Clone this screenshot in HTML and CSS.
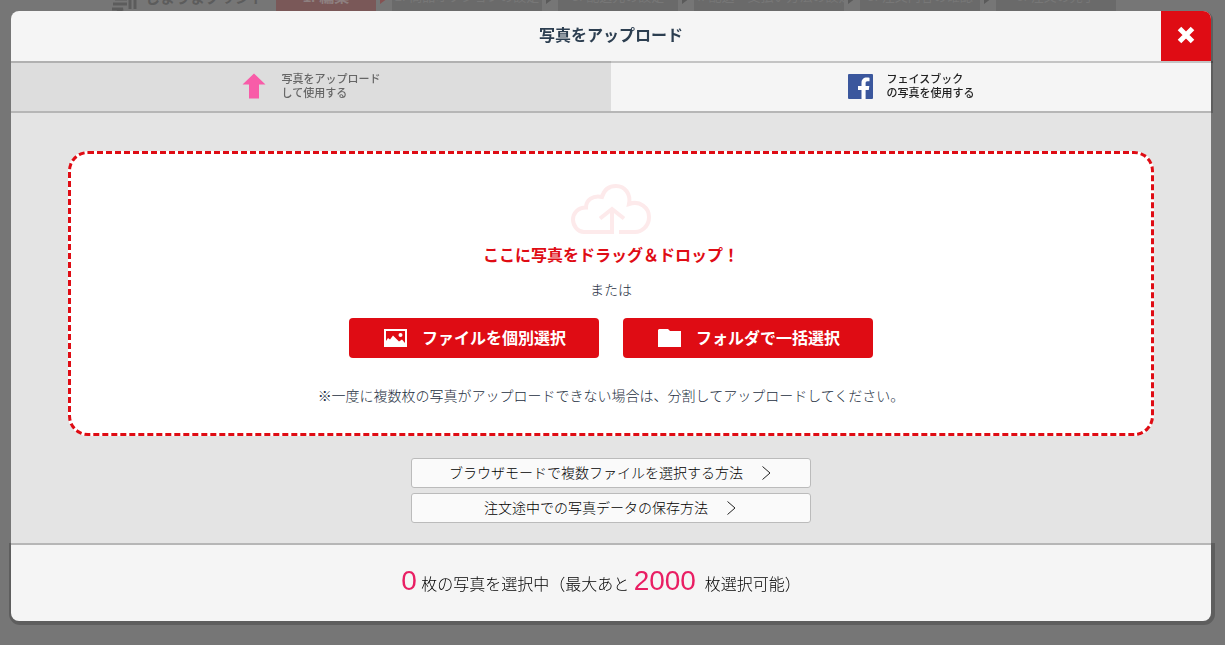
FILE: index.html
```html
<!DOCTYPE html>
<html lang="ja">
<head>
  <meta charset="UTF-8">
  <title>写真をアップロード</title>
  <meta name="viewport" content="width=device-width, initial-scale=1.0">
  <link rel="stylesheet" href="styles.css">
</head>
<body>
  <header class="site-header">
    <div class="site-logo">
      <svg width="26" height="24" viewBox="0 0 26 24" fill="none" stroke="currentColor" stroke-width="3">
        <path d="M4 12h12M2 17h14M1 22h11l-6 2M19 0v22M24 0v22"/>
      </svg>
      <span>しまうまプリント</span>
    </div>
    <ol class="steps">
      <li class="step step-s active">1. 編集</li>
      <li class="step step-l">2. 商品オプションの設定</li>
      <li class="step step-m">3. 配送先の設定</li>
      <li class="step step-l">4. 配送・支払い方法の設定</li>
      <li class="step step-m">5. 注文内容の確認</li>
      <li class="step step-m">6. 注文の完了</li>
    </ol>
  </header>

  <div class="overlay">
    <div class="modal" role="dialog" aria-labelledby="modal-title">
      <div class="modal-header">
        <h1 id="modal-title">写真をアップロード</h1>
        <button type="button" class="close-btn" aria-label="閉じる">
          <svg width="18" height="18" viewBox="0 0 18 18" stroke="#fff" stroke-width="5">
            <path d="M2.500 2.500l13 13M15.500 2.500l-13 13"/>
          </svg>
        </button>
      </div>

      <!-- Tabs -->
      <div class="tabs">
        <button type="button" class="tab active">
          <svg width="24" height="26" viewBox="0 0 24 26" fill="#f85ca8">
            <path d="M12 0.500L23.500 11.500H17V25.500H7V11.500H0.500z"/>
          </svg>
          <span>写真をアップロード<br>して使用する</span>
        </button>
        <button type="button" class="tab">
          <svg width="25" height="25" viewBox="0 0 25 25">
            <rect width="25" height="25" rx="1" fill="#3b579d"/>
            <path d="M13.500 25V16H10v-4h3.500V9c0-3.600 2-5.500 5.300-5.500 1.400 0 2.200.1 2.700.2v3.500h-2c-1.500 0-1.900.7-1.900 2V12h3.700l-.5 4h-3.200v9z" fill="#fff"/>
          </svg>
          <span>フェイスブック<br>の写真を使用する</span>
        </button>
      </div>

      <div class="modal-body">
        <div class="dropzone">
          <svg class="cloud" width="80" height="50" viewBox="0 0 80 50" fill="none" stroke="#fdeaeb" stroke-width="4">
            <path d="M43 48H13C7 48 2 42 2 35.500C2 29 7 23.500 15 23.500C15 16 22 11 31 13C33 6 38 2 45 2C54 2 60 10 58 20C69 16 78 24 78 33C78 42 71 48 64 48H48M41 48V26M29 34.500L41 25L53 34.500"/>
          </svg>
          <p class="drop-title">ここに写真をドラッグ＆ドロップ！</p>
          <p class="drop-or">または</p>
          <div class="drop-buttons">
            <button type="button" class="btn-red">
              <svg width="23" height="18" viewBox="0 0 23 18">
                <path d="M0 0h23v18H0z" fill="#fff"/>
                <path d="M2 2h19v12l-3-3.500-3 2L9 6.500l-3 4-2-1.500-2 3z" fill="#df0c14"/>
                <circle cx="16.500" cy="6" r="2" fill="#fff"/>
              </svg>
              <span>ファイルを個別選択</span>
            </button>
            <button type="button" class="btn-red">
              <svg width="23" height="18" viewBox="0 0 23 18" fill="#fff">
                <path d="M0 1l1-1h9l2 2h11v16H0z"/>
              </svg>
              <span>フォルダで一括選択</span>
            </button>
          </div>
          <p class="drop-note">※一度に複数枚の写真がアップロードできない場合は、分割してアップロードしてください。</p>
        </div>

        <div class="help-links">
          <a href="#" class="help-link">
            <span>ブラウザモードで複数ファイルを選択する方法</span>
            <svg width="9" height="14" viewBox="0 0 9 14" fill="none" stroke="#222"><path d="M0.500 0.500l7.500 6.500-7.500 6.500"/></svg>
          </a>
          <a href="#" class="help-link">
            <span>注文途中での写真データの保存方法</span>
            <svg width="9" height="14" viewBox="0 0 9 14" fill="none" stroke="#222"><path d="M0.500 0.500l7.500 6.500-7.500 6.500"/></svg>
          </a>
        </div>
      </div>

      <div class="modal-footer">
        <p><span class="count">0</span> 枚の写真を選択中（最大あと <span class="count">2000</span>&nbsp; 枚選択可能）</p>
      </div>
    </div>
  </div>
</body>
</html>
```

FILE: styles.css
```css
* {
  box-sizing: border-box;
}
html, body {
  height: 100%;
  margin: 0;
}
body {
  font-family: "Liberation Sans", "Noto Sans CJK JP", sans-serif;
  font-size: 14px;
  font-weight: 300;
  color: #1c2e40;
  background: #767676;
  overflow: hidden;
}
h1, p, ol {
  margin: 0;
  padding: 0;
}
button {
  font-family: inherit;
  border: none;
  cursor: pointer;
}

/* Page behind the modal, scrolled up under it */
.site-header {
  display: flex;
  height: 40px;
  margin-top: -13px;
  padding-left: 111px;
}
.site-logo {
  display: flex;
  width: 165px;
  gap: 8px;
  font-size: 15px;
  line-height: 22px;
  font-weight: bold;
  color: #5c5c5c;
  white-space: nowrap;
}
.steps {
  display: flex;
  gap: 16px;
  list-style: none;
}
.step {
  position: relative;
  height: 24px;
  font-size: 13px;
  line-height: 20px;
  font-weight: 400;
  text-align: center;
  white-space: nowrap;
  color: #777;
  background: #6a6a6a;
}
.step.active {
  font-size: 15px;
  font-weight: bold;
  color: #8e8080;
  background: #7a5858;
}
.step-s { width: 100px; }
.step-m { width: 120px; }
.step-l { width: 150px; }
.step:not(:last-child)::after {
  content: "";
  position: absolute;
  left: calc(100% + 4px);
  top: 5px;
  border: 6px solid transparent;
  border-left: 8px solid #5a5a5a;
  border-right: none;
}
.step.active::after {
  border-left-color: #855252;
}

/* Modal */
.overlay {
  position: fixed;
  inset: 0;
  display: flex;
  padding: 11px 14px 24px 11px;
}
.modal {
  flex: 1;
  display: flex;
  flex-direction: column;
}
.modal-header,
.tabs {
  position: relative;
  z-index: 1;
  flex-shrink: 0;
  box-shadow: 1px 1px 0 1px rgba(0, 0, 0, 0.2);
}
.modal-header {
  z-index: 2;
  display: grid;
  grid-template-columns: 50px 1fr 50px;
  height: 50px;
  background: #f5f5f5;
  border-radius: 8px 8px 0 0;
}
.modal-header h1 {
  grid-column: 2;
  font-size: 16px;
  line-height: 50px;
  text-align: center;
  color: #2c3e50;
}
.close-btn {
  display: flex;
  justify-content: center;
  align-items: center;
  padding: 0 0 2px;
  background: #df0c14;
  border-radius: 0 8px 0 0;
}
.tabs {
  display: flex;
  height: 50px;
}
.tab {
  flex: 1;
  display: flex;
  justify-content: center;
  align-items: center;
  gap: 14px;
  font-size: 11px;
  line-height: 14px;
  font-weight: 500;
  text-align: left;
  color: #222;
  background: #f5f5f5;
}
.tab.active {
  gap: 16px;
  color: #666;
  background: #ddd;
}
.modal-body {
  flex: 1;
  padding: 40px 57px 20px;
  background: #e4e4e4;
}
.dropzone {
  display: flex;
  flex-direction: column;
  align-items: center;
  padding: 30px 0 25px;
  background: #fff;
  border: 3px dashed #df0c14;
  border-radius: 20px;
}
.drop-title {
  margin-top: 10px;
  font-size: 16px;
  line-height: 24px;
  font-weight: bold;
  color: #df0c14;
}
.drop-or {
  margin-top: 10px;
  line-height: 24px;
}
.drop-buttons {
  display: flex;
  gap: 24px;
  margin-top: 16px;
}
.btn-red {
  display: flex;
  justify-content: center;
  align-items: center;
  gap: 15px;
  width: 250px;
  height: 40px;
  padding: 0 0 0 2px;
  font-size: 16px;
  font-weight: bold;
  color: #fff;
  background: #df0c14;
  border-radius: 4px;
}
.btn-red span {
  padding-bottom: 3px;
}
.drop-note {
  margin-top: 26px;
  line-height: 24px;
}
.help-links {
  display: flex;
  flex-direction: column;
  align-items: center;
  gap: 5px;
  margin-top: 22px;
}
.help-link {
  display: flex;
  justify-content: center;
  align-items: center;
  gap: 19px;
  width: 400px;
  height: 30px;
  padding-right: 2px;
  color: #000;
  text-decoration: none;
  background: #fafafa;
  border: 1px solid #bbb;
  border-radius: 3px;
}
.help-link span {
  padding-bottom: 2px;
}
.modal-footer {
  position: relative;
  flex-shrink: 0;
  height: 76px;
  padding: 18px 20px 0 0;
  font-size: 16px;
  line-height: 36px;
  text-align: center;
  color: #000;
  background: #f5f5f5;
  border-radius: 0 0 8px 8px;
  box-shadow: 1px 1px 0 3px rgba(0, 0, 0, 0.2);
}
.count {
  font-size: 28px;
  color: #e91e63;
}
```
